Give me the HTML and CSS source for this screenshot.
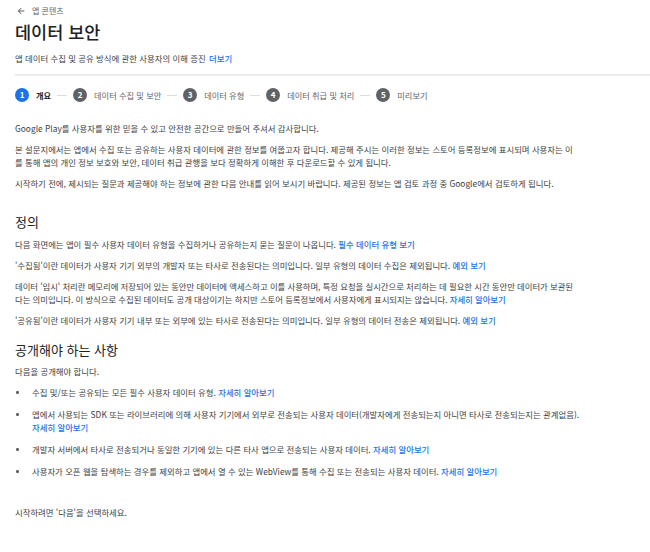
FILE: index.html
```html
<!DOCTYPE html>
<html lang="ko">
<head>
<meta charset="utf-8">
<link rel="stylesheet" href="styles.css">
</head>
<body>
<div class="page">
  <div class="back">
    <svg class="back-icon" viewBox="0 0 24 24" width="10" height="10"><path d="M20 11H7.83l5.59-5.59L12 4l-8 8 8 8 1.41-1.41L7.83 13H20v-2z" fill="#5f6368"/></svg>
    <span>앱 콘텐츠</span>
  </div>
  <h1 class="title">데이터 보안</h1>
  <p class="subtitle">앱 데이터 수집 및 공유 방식에 관한 사용자의 이해 증진 <a class="link">더보기</a></p>
  <div class="divider"></div>
  <div class="stepper">
    <div class="step active"><span class="num">1</span><span class="label">개요</span></div>
    <span class="sep"></span>
    <div class="step"><span class="num">2</span><span class="label">데이터 수집 및 보안</span></div>
    <span class="sep"></span>
    <div class="step"><span class="num">3</span><span class="label">데이터 유형</span></div>
    <span class="sep"></span>
    <div class="step"><span class="num">4</span><span class="label">데이터 취급 및 처리</span></div>
    <span class="sep"></span>
    <div class="step"><span class="num">5</span><span class="label">미리보기</span></div>
  </div>
  <div class="content">
    <p>Google Play를 사용자를 위한 믿을 수 있고 안전한 공간으로 만들어 주셔서 감사합니다.</p>
    <p>본 설문지에서는 앱에서 수집 또는 공유하는 사용자 데이터에 관한 정보를 여쭙고자 합니다. 제공해 주시는 이러한 정보는 스토어 등록정보에 표시되며 사용자는 이를 통해 앱의 개인 정보 보호와 보안, 데이터 취급 관행을 보다 정확하게 이해한 후 다운로드할 수 있게 됩니다.</p>
    <p>시작하기 전에, 제시되는 질문과 제공해야 하는 정보에 관한 다음 안내를 읽어 보시기 바랍니다. 제공된 정보는 앱 검토 과정 중 Google에서 검토하게 됩니다.</p>
    <h2 class="heading first">정의</h2>
    <p>다음 화면에는 앱이 필수 사용자 데이터 유형을 수집하거나 공유하는지 묻는 질문이 나옵니다. <a class="link">필수 데이터 유형 보기</a></p>
    <p>'수집됨'이란 데이터가 사용자 기기 외부의 개발자 또는 타사로 전송된다는 의미입니다. 일부 유형의 데이터 수집은 제외됩니다. <a class="link">예외 보기</a></p>
    <p class="tight">데이터 '임시' 처리란 메모리에 저장되어 있는 동안만 데이터에 액세스하고 이를 사용하며, 특정 요청을 실시간으로 처리하는 데 필요한 시간 동안만 데이터가 보관된다는 의미입니다. 이 방식으로 수집된 데이터도 공개 대상이기는 하지만 스토어 등록정보에서 사용자에게 표시되지는 않습니다. <a class="link">자세히 알아보기</a></p>
    <p>'공유됨'이란 데이터가 사용자 기기 내부 또는 외부에 있는 타사로 전송된다는 의미입니다. 일부 유형의 데이터 전송은 제외됩니다. <a class="link">예외 보기</a></p>
    <h2 class="heading">공개해야 하는 사항</h2>
    <p>다음을 공개해야 합니다.</p>
    <ul class="list">
      <li>수집 및/또는 공유되는 모든 필수 사용자 데이터 유형. <a class="link">자세히 알아보기</a></li>
      <li>앱에서 사용되는 SDK 또는 라이브러리에 의해 사용자 기기에서 외부로 전송되는 사용자 데이터(개발자에게 전송되는지 아니면 타사로 전송되는지는 관계없음).<br><a class="link">자세히 알아보기</a></li>
      <li>개발자 서버에서 타사로 전송되거나 동일한 기기에 있는 다른 타사 앱으로 전송되는 사용자 데이터. <a class="link">자세히 알아보기</a></li>
      <li>사용자가 오픈 웹을 탐색하는 경우를 제외하고 앱에서 열 수 있는 WebView를 통해 수집 또는 전송되는 사용자 데이터. <a class="link">자세히 알아보기</a></li>
    </ul>
    <p class="start">시작하려면 '다음'을 선택하세요.</p>
  </div>
</div>
</body>
</html>
```

FILE: styles.css
```css
* { box-sizing: border-box; }
html, body { margin: 0; padding: 0; background: #fff; }
body {
  font-family: "Noto Sans CJK KR", Roboto, sans-serif;
  color: #3c4043;
  font-size: 8.4px;
  line-height: 13px;
}
.page { padding: 4px 0 0 15px; }
.back {
  display: flex;
  align-items: center;
  gap: 6px;
  height: 13px;
  padding-left: 1px;
  color: #5f6368;
  font-size: 8px;
}
.back-icon { display: block; }
.title {
  margin: 3px 0 0;
  font-size: 17.5px;
  line-height: 24px;
  font-weight: 500;
  color: #202124;
}
.subtitle {
  margin: 7.5px 0 0;
  line-height: 13px;
}
.link { color: #1a73e8; text-decoration: none; font-weight: 500; }
.subtitle .link { margin-left: 1px; }
.divider {
  margin-top: 9.5px;
  height: 2px;
  background: #ebebeb;
}
.stepper {
  display: flex;
  align-items: center;
  margin-top: 12px;
  height: 14px;
}
.step { display: flex; align-items: center; gap: 7px; }
.num {
  width: 14px; height: 14px;
  border-radius: 50%;
  background: #5f6368;
  color: #fff;
  font-size: 8px;
  font-weight: 700;
  display: flex; align-items: center; justify-content: center;
  line-height: 1;
}
.step.active .num { background: #1a73e8; }
.label { color: #5f6368; font-size: 8.2px; }
.step.active .label { color: #202124; font-weight: 700; }
.sep { width: 10px; height: 1px; background: #dadce0; margin: 0 6px; }
.content { width: 558px; margin-top: 19.5px; }
.content p { margin: 0 0 8px; }
.content p.tight { letter-spacing: -0.05px; }
.heading {
  margin: 13.5px 0 4.5px;
  font-size: 13px;
  line-height: 20px;
  font-weight: 400;
  color: #202124;
}
.heading.first { margin-top: 22.5px; margin-bottom: 5.5px; }
.list { margin: 8px -8px 0 0; padding: 0 0 0 17px; list-style: none; }
.list li { position: relative; margin-bottom: 9px; }
.list li::before {
  content: "";
  position: absolute;
  left: -16px; top: 5.5px;
  width: 2.5px; height: 2.5px;
  border-radius: 50%;
  background: #5f6368;
}
.content p.start { margin-top: 28px; }
```
